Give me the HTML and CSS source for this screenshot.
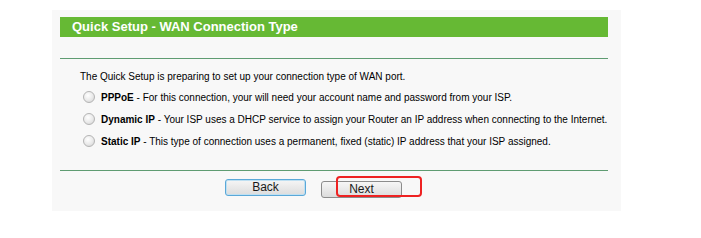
FILE: index.html
```html
<!DOCTYPE html>
<html lang="en">
<head>
  <meta charset="UTF-8" />
  <title>Quick Setup - WAN Connection Type</title>
  <link rel="stylesheet" href="styles.css">
</head>
<body>
  <div class="panel">
    <!-- TITLE -->
    <div class="title-bar">Quick Setup - WAN Connection Type</div>
    <div class="rule"></div>

    <!-- OPTIONS -->
    <div class="content">
      <p class="intro">The Quick Setup is preparing to set up your connection type of WAN port.</p>
      <label class="option"><span class="radio"></span><b>PPPoE</b>&nbsp;- For this connection, your will need your account name and password from your ISP.</label>
      <label class="option"><span class="radio"></span><b>Dynamic IP</b>&nbsp;- Your ISP uses a DHCP service to assign your Router an IP address when connecting to the Internet.</label>
      <label class="option"><span class="radio"></span><b>Static IP</b>&nbsp;- This type of connection uses a permanent, fixed (static) IP address that your ISP assigned.</label>
    </div>
    <div class="rule"></div>

    <!-- BUTTONS -->
    <div class="buttons">
      <button class="btn btn-focus">Back</button>
      <div class="next-wrap">
        <button class="btn">Next</button>
        <span class="highlight"></span>
      </div>
    </div>
  </div>
</body>
</html>
```
FILE: styles.css
```css
body {
  margin: 0;
  background: #fff;
  color: #000;
  font-family: "Liberation Sans", Arial, sans-serif;
}

.panel {
  width: 569px;
  height: 201px;
  margin: 10px 0 0 52px;
  padding: 7px 0 0 8px;
  box-sizing: border-box;
  background: #f8f8f8;
}

.title-bar {
  width: 548px;
  height: 20px;
  box-sizing: border-box;
  padding-left: 12px;
  background: #66b934;
  color: #fff;
  font-size: 13px;
  font-weight: bold;
  line-height: 20px;
}

.rule {
  width: 548px;
  height: 1px;
  margin-top: 21px;
  background: #5f9c72;
}

.content {
  padding: 8px 0 0 20px;
  font-size: 10px;
}

.intro {
  margin: 0;
  height: 19px;
  line-height: 19px;
}

.option {
  display: flex;
  align-items: center;
  height: 22px;
  padding-left: 3px;
}

.radio {
  width: 10px;
  height: 10px;
  margin-right: 6px;
  border: 1px solid #b4b4b4;
  border-radius: 50%;
  background: radial-gradient(circle at 40% 35%, #fff 0%, #e9e9e9 55%, #cfcfcf 100%);
  flex: none;
}

.content + .rule {
  margin-top: 18px;
}

.buttons {
  display: flex;
  gap: 15px;
  padding: 8px 0 0 165px;
}

.btn {
  width: 81px;
  height: 17px;
  padding: 0;
  border: 1px solid #8c8c8c;
  border-radius: 3px;
  background: linear-gradient(#f6f6f6, #dcdcdc);
  color: #1a1a1a;
  font-family: "Liberation Sans", Arial, sans-serif;
  font-size: 12px;
  line-height: 15px;
}

.btn-focus {
  border-color: #5aa8d8;
  box-shadow: inset 0 0 0 1px #bfe0f2;
}

.next-wrap {
  position: relative;
}

.highlight {
  position: absolute;
  left: 15px;
  top: -3px;
  width: 82px;
  height: 17px;
  border: 2px solid #ee2222;
  border-radius: 4px;
}
```
